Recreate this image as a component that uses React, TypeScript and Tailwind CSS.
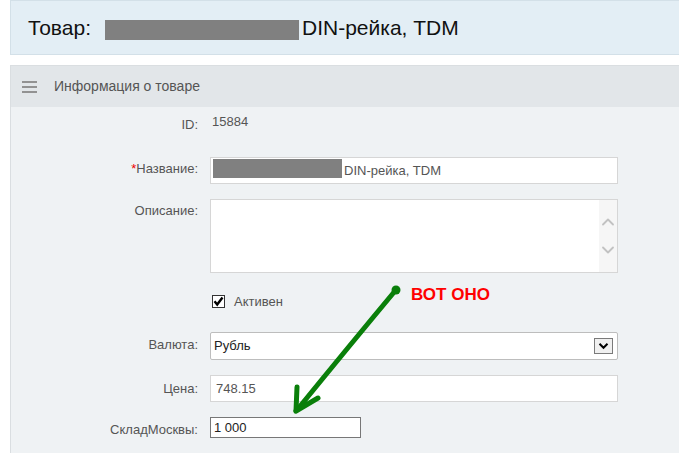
import { ChevronDown, ChevronUp } from "lucide-react";

const Label = ({ children, pt }: { children: React.ReactNode; pt: string }) => (
  <div className={`w-[187px] shrink-0 text-right text-[13px] leading-[15px] text-[#555] ${pt}`}>
    {children}
  </div>
);

const App = () => {
  return (
    <div className="relative w-[679px] h-[453px] overflow-hidden bg-white font-['Liberation_Sans',Arial,sans-serif]">
      {/* Page title */}
      <div className="ml-[10px] h-[55px] bg-[#e3eef5] border border-r-0 border-[#d3e0e8] flex items-center pl-[17px] text-[21px] leading-[24px] text-[#111]">
        <span>Товар:</span>
        <span className="ml-[14px] mt-[5px] w-[194px] h-[20px] bg-[#808080]" />
        <span className="ml-[3px]">DIN-рейка, TDM</span>
      </div>

      {/* Panel */}
      <div className="ml-[10px] mt-[10px] w-[700px] border border-[#dadee1] bg-[#eff2f4] h-[400px]">
        <div className="h-[41px] bg-[#e2e6e9] flex items-center">
          <div className="ml-[11px] w-[15px] flex flex-col gap-[3px]">
            <span className="h-[2px] bg-[#929292]" />
            <span className="h-[2px] bg-[#929292]" />
            <span className="h-[2px] bg-[#929292]" />
          </div>
          <span className="ml-[17px] text-[14px] text-[#555]">Информация о товаре</span>
        </div>

        <div className="flex flex-col">
          {/* ID */}
          <div className="flex gap-[12px] mt-[7px] h-[15px]">
            <Label pt="pt-[3px]">ID:</Label>
            <div className="pl-[2px] text-[13px] leading-[15px] text-[#555]">15884</div>
          </div>

          {/* Name */}
          <div className="flex gap-[12px] mt-[28px]">
            <Label pt="pt-[4px]">
              <span className="text-[#e00]">*</span>Название:
            </Label>
            <div className="w-[408px] h-[27px] bg-white border border-[#d6d6d6] flex items-center pl-[2px] text-[13px] text-[#555]">
              <span className="w-[129px] h-[19px] -mt-[4px] bg-[#808080]" />
              <span className="ml-[2px]">DIN-рейка, TDM</span>
            </div>
          </div>

          {/* Description */}
          <div className="flex gap-[12px] mt-[15px]">
            <Label pt="pt-[4px]">Описание:</Label>
            <div className="w-[408px] h-[74px] bg-white border border-[#d6d6d6] flex justify-end">
              <div className="w-[18px] bg-[#f6f6f6] flex flex-col items-center pt-[12px] gap-[8px] text-[#c2c2c2]">
                <ChevronUp size={20} strokeWidth={2.2} />
                <ChevronDown size={20} strokeWidth={2.2} />
              </div>
            </div>
          </div>

          {/* Active */}
          <div className="flex gap-[12px] mt-[21px] h-[15px]">
            <div className="w-[187px] shrink-0" />
            <div className="flex items-start">
              <div className="ml-[2px] mt-[1px] w-[13px] h-[13px] border border-[#333] bg-white flex items-center justify-center">
                <svg width="11" height="11" viewBox="0 0 11 11">
                  <path d="M1.5 5.3 L4.2 8.5 L9.5 1.5" fill="none" stroke="#000" strokeWidth="2.4" />
                </svg>
              </div>
              <span className="ml-[9px] text-[13px] leading-[15px] text-[#555]">Активен</span>
            </div>
          </div>

          {/* Currency */}
          <div className="flex gap-[12px] mt-[23px]">
            <Label pt="pt-[5px]">Валюта:</Label>
            <div className="w-[408px] h-[28px] bg-white border border-[#bdbdbd] rounded-[2px] flex items-center justify-between pl-[3px] pr-[4px] text-[13px] text-[#222]">
              <span>Рубль</span>
              <div className="w-[19px] h-[16px] border border-[#7a7a7a] bg-[#f0f0f0] flex items-center justify-center">
                <svg width="11" height="8" viewBox="0 0 11 8">
                  <path d="M1.5 1.8 L5.5 5.8 L9.5 1.8" fill="none" stroke="#000" strokeWidth="2" />
                </svg>
              </div>
            </div>
          </div>

          {/* Price */}
          <div className="flex gap-[12px] mt-[15px]">
            <Label pt="pt-[6px]">Цена:</Label>
            <div className="w-[408px] h-[27px] bg-white border border-[#d6d6d6] flex items-center pl-[5px] text-[13px] text-[#555]">
              748.15
            </div>
          </div>

          {/* Moscow stock */}
          <div className="flex gap-[12px] mt-[15px]">
            <Label pt="pt-[5px]">СкладМосквы:</Label>
            <div className="w-[151px] h-[21px] bg-white border border-[#777] flex items-center pl-[3px] text-[13px] text-[#222]">
              1 000
            </div>
          </div>
        </div>
      </div>

      {/* Annotation */}
      <svg className="absolute left-0 top-0 pointer-events-none" width="679" height="453">
        <g stroke="#0a7f0a" strokeWidth="5" strokeLinecap="round" fill="none">
          <path d="M395 291 Q350 345 297 410" />
          <path d="M296 411 L297 387" />
          <path d="M296 411 L318 398" />
        </g>
        <circle cx="396" cy="290" r="4.5" fill="#0a7f0a" />
      </svg>
      <div className="absolute left-[411px] top-[285px] text-[17px] leading-[20px] font-bold text-[#f00]">ВОТ ОНО</div>
    </div>
  );
};

export default App;
